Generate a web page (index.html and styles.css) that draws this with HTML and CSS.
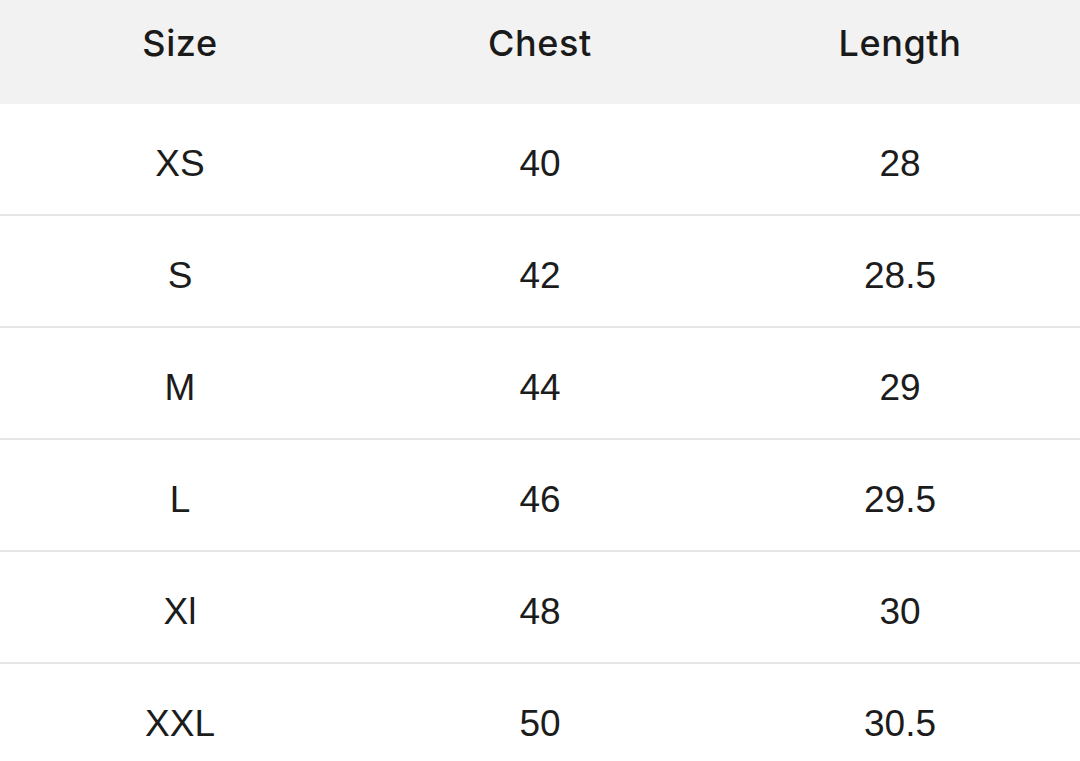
FILE: index.html
```html
<!DOCTYPE html>
<html lang="en">
<head>
<meta charset="utf-8">
<link rel="stylesheet" href="styles.css">
</head>
<body>
<div class="table">
  <div class="row head">
    <div class="cell">Size</div>
    <div class="cell">Chest</div>
    <div class="cell">Length</div>
  </div>
  <div class="row"><div class="cell">XS</div><div class="cell">40</div><div class="cell">28</div></div>
  <div class="row"><div class="cell">S</div><div class="cell">42</div><div class="cell">28.5</div></div>
  <div class="row"><div class="cell">M</div><div class="cell">44</div><div class="cell">29</div></div>
  <div class="row"><div class="cell">L</div><div class="cell">46</div><div class="cell">29.5</div></div>
  <div class="row"><div class="cell">Xl</div><div class="cell">48</div><div class="cell">30</div></div>
  <div class="row last"><div class="cell">XXL</div><div class="cell">50</div><div class="cell">30.5</div></div>
</div>
</body>
</html>
```
FILE: styles.css
```css
html, body {
  margin: 0;
  padding: 0;
  background: #ffffff;
}
body {
  width: 1080px;
  height: 761px;
  overflow: hidden;
}
.table {
  display: flex;
  flex-direction: column;
}
.row {
  display: grid;
  grid-template-columns: 360px 360px 360px;
  height: 110px;
  border-bottom: 2px solid #e6e6e6;
  font-family: "Liberation Sans", Arial, sans-serif;
  font-size: 37px;
  color: #1c1c1c;
}
.row.last {
  border-bottom: none;
}
.row.head {
  height: 104px;
  border-bottom: none;
  background: #f2f2f2;
  font-family: "Inter", "Lato", sans-serif;
  font-size: 36px;
  font-weight: 500;
  letter-spacing: 0.6px;
  color: #1a1a1a;
}
.cell {
  display: flex;
  align-items: center;
  justify-content: center;
  line-height: 1;
  padding-top: 9px;
}
.head .cell {
  padding-top: 0;
  padding-bottom: 19px;
}
```
